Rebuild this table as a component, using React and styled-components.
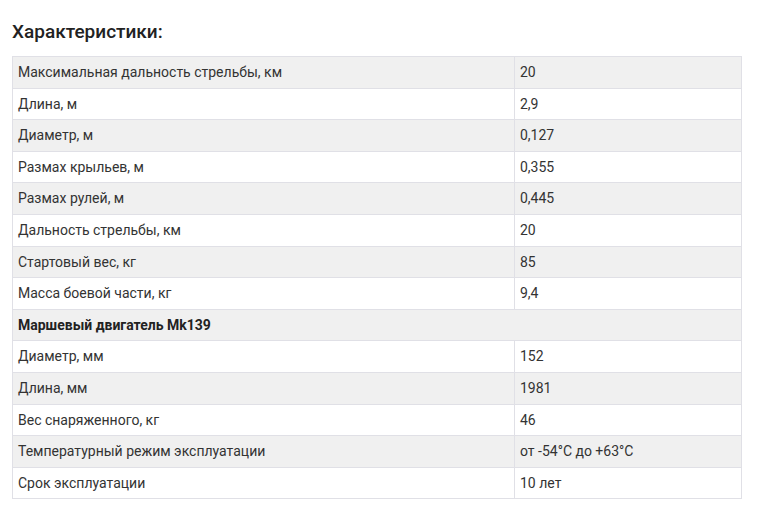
import React from 'react';
import styled, { createGlobalStyle } from 'styled-components';

const GlobalStyle = createGlobalStyle`
  body {
    margin: 0;
    background: #fff;
    font-family: Roboto, 'Liberation Sans', sans-serif;
    color: #333;
  }
`;

const Page = styled.div`
  padding: 19px 17px 0 12px;
`;

const Heading = styled.h3`
  margin: 0 0 11px;
  font-size: 19px;
  line-height: 26px;
  font-weight: 500;
  color: #222;
`;

const Table = styled.table`
  width: 730px;
  border-collapse: collapse;
  font-size: 14px;
`;

const Row = styled.tr`
  background: ${(p) => (p.$striped ? '#f0f0f0' : '#fff')};
`;

const Cell = styled.td`
  border: 1px solid #e0e0e6;
  padding: 6px 5px;
  line-height: 18.6px;
  height: 18.6px;
  width: ${(p) => p.$width || 'auto'};
  font-weight: ${(p) => (p.$bold ? 700 : 400)};
  color: ${(p) => (p.$bold ? '#222' : '#333')};
`;

const rows = [
  ['Максимальная дальность стрельбы, км', '20'],
  ['Длина, м', '2,9'],
  ['Диаметр, м', '0,127'],
  ['Размах крыльев, м', '0,355'],
  ['Размах рулей, м', '0,445'],
  ['Дальность стрельбы, км', '20'],
  ['Стартовый вес, кг', '85'],
  ['Масса боевой части, кг', '9,4'],
  ['Маршевый двигатель Mk139'],
  ['Диаметр, мм', '152'],
  ['Длина, мм', '1981'],
  ['Вес снаряженного, кг', '46'],
  ['Температурный режим эксплуатации', 'от -54°C до +63°C'],
  ['Срок эксплуатации', '10 лет'],
];

export default function App() {
  return (
    <Page>
      <GlobalStyle />
      <Heading>Характеристики:</Heading>
      <Table>
        <tbody>
          {rows.map((r, i) => (
            <Row key={i} $striped={i % 2 === 0}>
              {r.length === 1 ? (
                <Cell colSpan={2} $bold>
                  {r[0]}
                </Cell>
              ) : (
                <>
                  <Cell $width="491px">{r[0]}</Cell>
                  <Cell>{r[1]}</Cell>
                </>
              )}
            </Row>
          ))}
        </tbody>
      </Table>
    </Page>
  );
}
